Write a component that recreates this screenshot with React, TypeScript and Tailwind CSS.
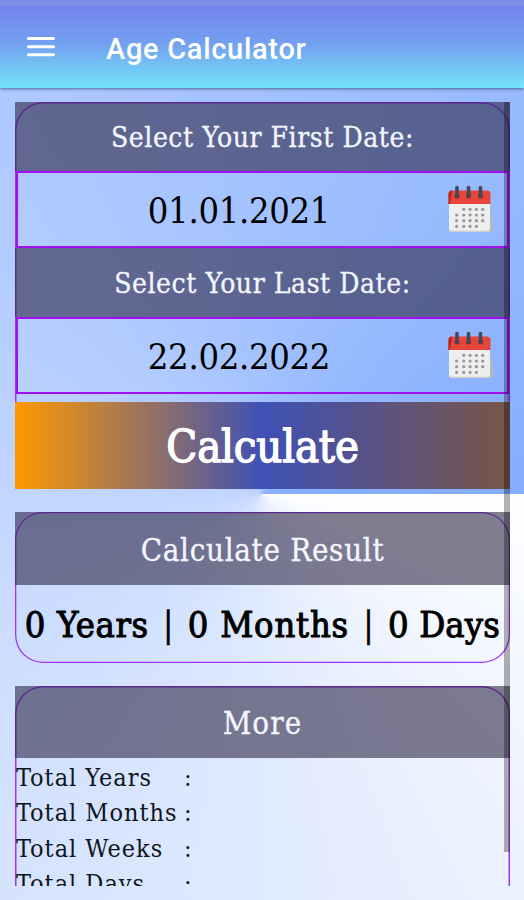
const serif = "font-['DejaVu_Serif_Condensed','DejaVu_Serif',serif] [font-stretch:condensed] whitespace-nowrap";

const dots = [
  [24, 32, 40, 48],
  [15, 24, 32, 40, 48],
  [15, 24, 32, 40, 48],
  [15, 24, 32, 40],
];

function CalendarIcon() {
  return (
    <svg className="block h-[50px] w-[50px]" viewBox="0 0 50 50">
      <path d="M42 9l4.500 35q0 3-3 3H39V9z" fill="#b3b7be" />
      <path d="M2 17H43V44q0 3-3 3H5q-3 0-3-3z" fill="#eeeeec" />
      <path d="M2 43q0 4 3 4H40q3 0 3-4V42q0 3.500-3 3.500H5q-3 0-3-2.500z" fill="#d2d2d0" />
      <path d="M1.500 9q0-3.500 3.500-3.500H40q3.500 0 3.500 3.500V19H1.500z" fill="#e8453a" />
      <path d="M1.500 9q0-3.500 3.500-3.500L3 19H1.500z" fill="#b9241d" />
      {[10, 21.5, 33.5].map((x) => (
        <g key={x}>
          <circle cx={x} cy="11" r="2.500" fill="#713232" />
          <path d={`M${x} 2.500V11`} stroke="#424a56" strokeWidth="3.600" strokeLinecap="round" />
        </g>
      ))}
      {dots.map((row, i) =>
        row.map((x) => (
          <circle key={`${i}-${x}`} cx={x * 0.79 - 2.2} cy={24.3 + i * 5.7} r="1.600" fill="#98989a" />
        )),
      )}
    </svg>
  );
}

function Heading({ text, className }: { text: string; className: string }) {
  return (
    <div className={`flex items-center justify-center bg-[rgba(40,33,64,0.58)] text-[#f4f6ff] [-webkit-text-stroke:0.3px_#f4f6ff] ${serif} ${className}`}>
      {text}
    </div>
  );
}

function DateRow({ value, className }: { value: string; className: string }) {
  return (
    <div className={`mx-px flex items-center border-2 border-[#a010f0] ${className}`}>
      <div className={`ml-[129px] mt-[2px] w-[184px] text-center text-[36px] leading-none tracking-[-0.3px] text-black ${serif}`}>{value}</div>
      <div className="ml-auto mr-[10px]">
        <CalendarIcon />
      </div>
    </div>
  );
}

const totals = ["Total Years", "Total Months", "Total Weeks", "Total Days"];

export default function App() {
  return (
    <div className="flex h-[900px] w-[524px] flex-col overflow-hidden bg-[conic-gradient(from_90deg_at_262px_494px,#ffffff,#84adff)]">
      <header className="relative h-[88px] shrink-0 border-t-[6px] border-[#7b8fe4] bg-[linear-gradient(#7483ef,#73a2f0_48%,#72e5f8)] shadow-[0_1px_3px_rgba(30,50,90,0.65)]">
        <div className="flex h-[82px] items-center">
          <svg className="ml-[27px] h-[22px] w-7" viewBox="0 0 28 22">
            <path d="M1.500 2.500h25M1.500 10.700h25M1.500 18.700h25" stroke="#fff" strokeWidth="3" strokeLinecap="round" />
          </svg>
          <h1 className="ml-[51px] mt-[5px] font-[Roboto,sans-serif] text-[29px] font-medium tracking-[0.7px] text-white">Age Calculator</h1>
        </div>
      </header>

      <main className="relative ml-[15px] mt-[14px] h-[784px] w-[495px] shrink-0 overflow-hidden">
        <section className="h-[302px] rounded-t-[28px] shadow-[inset_0_0_0_1.5px_#a232ff]">
          <Heading text="Select Your First Date:" className="h-[69px] pt-[2px] text-[28px] tracking-[0.55px]" />
          <DateRow value="01.01.2021" className="h-[77px]" />
          <Heading text="Select Your Last Date:" className="h-[69px] pt-[2px] text-[28px] tracking-[0.55px]" />
          <DateRow value="22.02.2022" className="h-[77px]" />
        </section>
        <button className={`relative -mt-[2px] flex h-[87px] w-full items-center justify-center bg-[linear-gradient(90deg,#ff9800,#3f51b5_50%,#795548)] pt-[2px] text-[45px] tracking-[-0.2px] text-white [-webkit-text-stroke:1.3px_#fff] ${serif}`}>
          Calculate
        </button>

        <section className="mt-[23px] h-[151px] rounded-[28px] shadow-[inset_0_0_0_1.3px_#a232ff]">
          <Heading text="Calculate Result" className="h-[73px] pt-[3px] text-[31px] tracking-[0.7px]" />
          <div className={`flex h-[78px] items-center justify-center gap-[14px] pt-[2px] text-[36px] text-black [-webkit-text-stroke:1px_#000] ${serif}`}>
            <span className="tracking-[0.6px]">0 Years</span>
            <span className="[-webkit-text-stroke:0.3px_#000]">|</span>
            <span className="tracking-[0.8px]">0 Months</span>
            <span className="[-webkit-text-stroke:0.3px_#000]">|</span>
            <span className="tracking-[0.2px]">0 Days</span>
          </div>
        </section>

        <section className="mt-[23px] h-[300px] rounded-t-[28px] shadow-[inset_0_0_0_1.5px_#a232ff]">
          <Heading text="More" className="h-[72px] pt-[3px] text-[31px] tracking-[1.1px]" />
          {totals.map((label) => (
            <div key={label} className={`flex h-[35.500px] items-center pl-px pt-[3px] text-[25px] tracking-[1px] text-[#10151c] ${serif}`}>
              <span className="w-[168px]">{label}</span>
              <span>:</span>
            </div>
          ))}
        </section>

        <div className="absolute right-0 top-0 h-[750px] w-[6px] bg-black/30" />
      </main>
    </div>
  );
}
